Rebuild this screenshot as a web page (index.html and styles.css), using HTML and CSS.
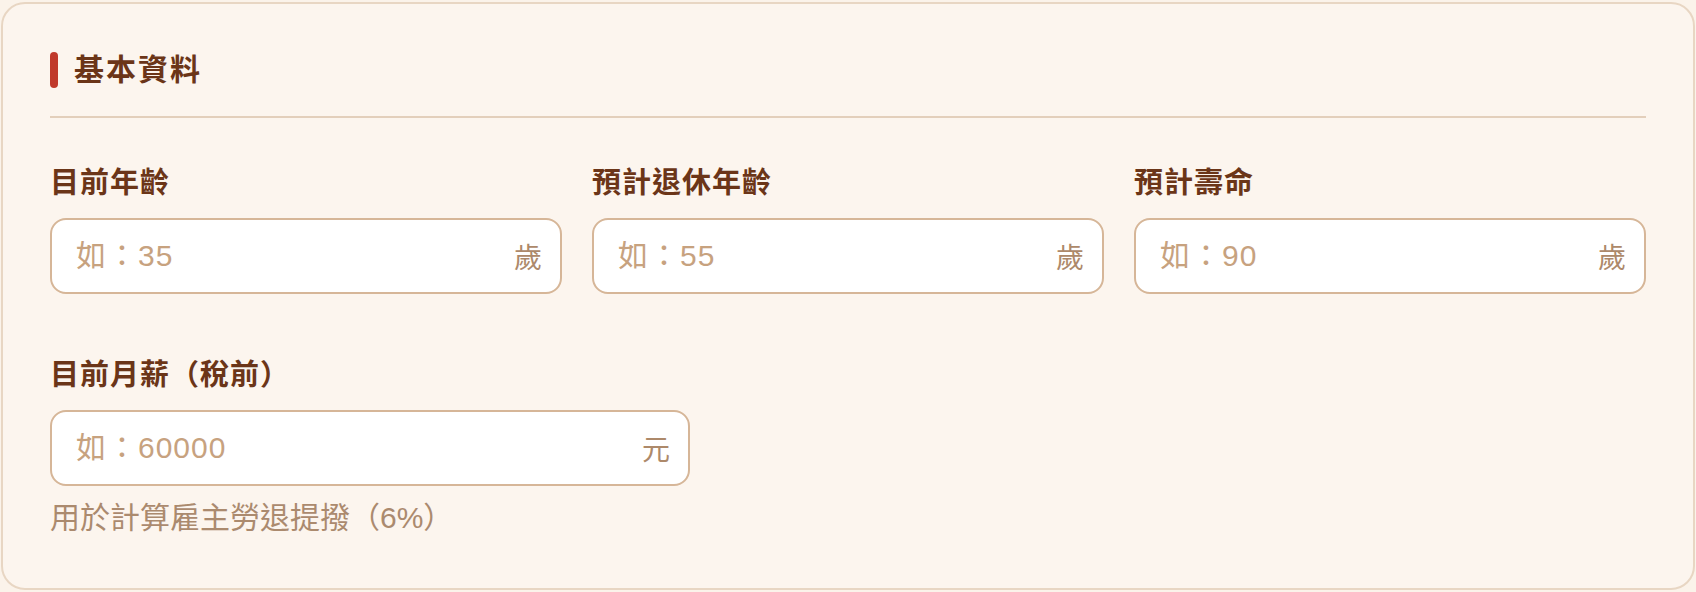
FILE: index.html
```html
<!DOCTYPE html>
<html lang="zh-TW">
<head>
    <meta charset="UTF-8">
    <title>基本資料</title>
    <link rel="stylesheet" href="styles.css">
</head>
<body>
    <!-- 基本資料卡片 -->
    <section class="card">
        <div class="card-header">
            <span class="accent-bar"></span>
            <h2 class="card-title">基本資料</h2>
        </div>

        <!-- 年齡欄位 -->
        <div class="field-grid">
            <div class="field">
                <label class="field-label" for="age-now">目前年齡</label>
                <div class="input-box">
                    <input id="age-now" class="input" type="text" placeholder="如：35">
                    <span class="unit">歲</span>
                </div>
            </div>
            <div class="field">
                <label class="field-label" for="age-retire">預計退休年齡</label>
                <div class="input-box">
                    <input id="age-retire" class="input" type="text" placeholder="如：55">
                    <span class="unit">歲</span>
                </div>
            </div>
            <div class="field">
                <label class="field-label" for="age-life">預計壽命</label>
                <div class="input-box">
                    <input id="age-life" class="input" type="text" placeholder="如：90">
                    <span class="unit">歲</span>
                </div>
            </div>
        </div>

        <!-- 月薪欄位 -->
        <div class="field field-salary">
            <label class="field-label" for="salary">目前月薪（稅前）</label>
            <div class="input-box">
                <input id="salary" class="input" type="text" placeholder="如：60000">
                <span class="unit">元</span>
            </div>
            <p class="hint">用於計算雇主勞退提撥（6%）</p>
        </div>
    </section>
</body>
</html>
```

FILE: styles.css
```css
/* 頁面整體 */
body {
    margin: 0;
    padding: 2px 1px;
    background: #fbf3ea;
    font-family: 'Liberation Sans', 'Noto Sans CJK TC', sans-serif;
    color: #6b3518;
}

/* 卡片 */
.card {
    background: #fcf5ee;
    border: 2px solid #e8d6c3;
    border-radius: 24px;
    padding: 48px 47px 52px;
}

/* 卡片標題列 */
.card-header {
    display: flex;
    align-items: center;
    gap: 16px;
    height: 36px;
    padding-bottom: 28px;
    border-bottom: 2px solid #e3cfbb;
}

.accent-bar {
    width: 8px;
    height: 36px;
    border-radius: 4px;
    background: #c0392b;
}

.card-title {
    margin: 0;
    font-size: 30px;
    font-weight: bold;
    letter-spacing: 2px;
    line-height: 36px;
    color: #6b3518;
}

/* 三欄欄位 */
.field-grid {
    display: grid;
    grid-template-columns: repeat(3, 1fr);
    gap: 30px;
    margin-top: 48px;
}

.field {
    display: flex;
    flex-direction: column;
}

.field-label {
    font-size: 29px;
    font-weight: bold;
    letter-spacing: 1px;
    line-height: 34px;
    margin-bottom: 18px;
    color: #6b3518;
}

/* 輸入框 */
.input-box {
    display: flex;
    align-items: center;
    height: 76px;
    box-sizing: border-box;
    background: #fff;
    border: 2px solid #d6b698;
    border-radius: 16px;
    padding: 0 18px 0 24px;
}

.input {
    flex: 1;
    min-width: 0;
    border: none;
    outline: none;
    background: transparent;
    padding: 0;
    font-family: inherit;
    font-size: 30px;
    letter-spacing: 1px;
    color: #6b3518;
}

.input::placeholder {
    color: #c7a27f;
}

.unit {
    font-size: 28px;
    color: #ad896a;
}

/* 月薪欄位 */
.field-salary {
    width: 640px;
    margin-top: 64px;
}

.hint {
    margin: 14px 0 0;
    font-size: 30px;
    line-height: 36px;
    color: #ab8a6e;
}
```
